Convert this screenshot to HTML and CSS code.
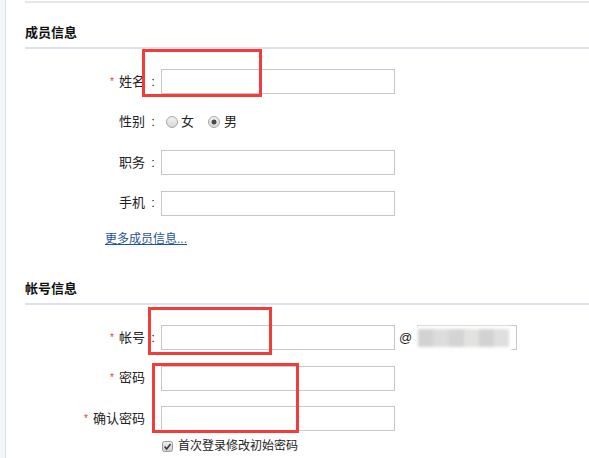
FILE: index.html
```html
<!DOCTYPE html>
<html lang="zh-CN">
<head>
<meta charset="utf-8">
<title>成员信息</title>
<link rel="stylesheet" href="styles.css">
</head>
<body>
<div class="page">
  <aside class="strip"></aside>
  <main class="main">
    <section class="sec">
      <h2 class="sec-title">成员信息</h2>
      <div class="form">
        <div class="row">
          <label class="lbl"><span class="req">*</span>姓名</label><span class="colon">:</span>
          <input class="ipt" type="text">
        </div>
        <div class="row">
          <label class="lbl">性别</label><span class="colon">:</span>
          <div class="radios">
            <input class="radio" type="radio" name="sex"><span class="opt">女</span>
            <input class="radio second" type="radio" name="sex" checked><span class="opt">男</span>
          </div>
        </div>
        <div class="row">
          <label class="lbl">职务</label><span class="colon">:</span>
          <input class="ipt" type="text">
        </div>
        <div class="row">
          <label class="lbl">手机</label><span class="colon">:</span>
          <input class="ipt" type="text">
        </div>
      </div>
      <div class="more-wrap"><a class="more" href="#">更多成员信息...</a></div>
    </section>
    <section class="sec sec-2">
      <h2 class="sec-title">帐号信息</h2>
      <div class="form">
        <div class="row">
          <label class="lbl"><span class="req">*</span>帐号</label><span class="colon">:</span>
          <input class="ipt" type="text">
          <span class="at">@</span>
          <div class="domain">
            <div class="mask">
              <div class="pix"></div>
            </div>
          </div>
        </div>
        <div class="row">
          <label class="lbl"><span class="req">*</span>密码</label><span class="colon"></span>
          <input class="ipt" type="password">
        </div>
        <div class="row">
          <label class="lbl"><span class="req">*</span>确认密码</label><span class="colon"></span>
          <input class="ipt" type="password">
        </div>
      </div>
      <div class="check-row">
        <span class="cbx"><svg width="11" height="11" viewBox="0 0 11 11"><defs><linearGradient id="g" x1="0" y1="0" x2="0" y2="1"><stop offset="0" stop-color="#f0f0f0"/><stop offset="1" stop-color="#cdcdcd"/></linearGradient></defs><rect x="0.5" y="0.5" width="10" height="10" rx="2" fill="url(#g)" stroke="#9a9a9a"/><path d="M2.6 5.6 L4.6 7.9 L8.6 2.9" fill="none" stroke="#3a3a3a" stroke-width="1.6"/></svg></span>
        <span class="check-text">首次登录修改初始密码</span>
      </div>
    </section>
  </main>
  <div class="mark m1"></div>
  <div class="mark m2"></div>
  <div class="mark m3"></div>
</div>
</body>
</html>
```
FILE: styles.css
```css
* { box-sizing: border-box; }
html, body { margin: 0; padding: 0; background: #fff; }
body {
  font-family: "Liberation Sans", "Noto Sans CJK SC", sans-serif;
  font-size: 13px;
  color: #222;
  overflow: hidden;
}
.page {
  position: relative;
  display: flex;
  min-height: 100vh;
}
.strip {
  width: 6px;
  flex: none;
  background: #f3f5f8;
  border-right: 1px solid #dde1e6;
}
.main {
  flex: 1;
  margin-left: 19px;
  margin-top: 1px;
  border-top: 2px solid #e6e6e6;
}
.sec-title {
  margin: 0;
  padding: 20px 0 4px 0;
  font-size: 13px;
  line-height: 20px;
  font-weight: bold;
  color: #111;
  border-bottom: 2px solid #dbe3ec;
}
.sec-2 { margin-top: 10px; }
.form {
  padding-top: 20px;
  display: flex;
  flex-direction: column;
  gap: 15.5px;
}
.row {
  display: flex;
  align-items: center;
  height: 25px;
}
.lbl {
  width: 120px;
  text-align: right;
  line-height: 20px;
  white-space: nowrap;
}
.req {
  color: #e4393c;
  font-size: 10px;
  margin-right: 5px;
  vertical-align: 1px;
}
.colon {
  width: 16px;
  text-align: center;
  line-height: 20px;
}
.ipt {
  width: 234px;
  height: 25px;
  margin: 0;
  border: 1px solid #c6c6c6;
  background: #fff;
  padding: 0 4px;
  font: inherit;
  outline: none;
}
.radios {
  display: flex;
  align-items: center;
  margin-left: 5px;
}
.radio {
  appearance: none;
  -webkit-appearance: none;
  width: 12px;
  height: 12px;
  margin: 0 3px 0 0;
  border: 1px solid #a8a8a8;
  border-radius: 50%;
  background: linear-gradient(#f2f2f2, #d6d6d6);
}
.radio.second { margin-left: 14px; margin-right: 4px; }
.radio:checked {
  background: radial-gradient(circle, #4a4a4a 0 2.2px, transparent 2.8px), linear-gradient(#f2f2f2, #d6d6d6);
}
.opt { line-height: 20px; }
.more-wrap {
  margin-top: 13.5px;
  padding-left: 80px;
  line-height: 20px;
}
.more {
  font-size: 12px;
  color: #1f5497;
  text-decoration: underline;
}
.at {
  margin: 0 5px 0 4px;
  font-size: 13px;
  line-height: 20px;
}
.domain {
  position: relative;
  width: 100px;
  height: 25px;
  border: 1px solid #c9c9c9;
}
.mask {
  position: absolute;
  left: -3px;
  top: 0;
  right: 4px;
  bottom: -3px;
  background: #fff;
  border-radius: 4px;
  filter: blur(1px);
  display: flex;
  align-items: center;
  padding: 0 3px 2px 3px;
}
.pix {
  width: 92px;
  height: 18px;
  margin-left: 0;
  background: linear-gradient(90deg,
    #d2d2d2 0 15px, #dcdcdc 15px 31px, #d4d4d4 31px 46px,
    #e2e2e0 46px 61px, #d2d2d2 61px 76px, #dfdfdf 76px 92px);
  filter: blur(1px);
}
.check-row {
  display: flex;
  align-items: center;
  margin-top: 6px;
  height: 18px;
  padding-left: 137px;
}
.cbx { display: flex; width: 11px; height: 11px; margin-right: 5px; }
.check-text { font-size: 12px; color: #222; line-height: 18px; }
.mark {
  position: absolute;
  border: 3px solid #f23c3c;
  pointer-events: none;
}
.m1 { left: 142px; top: 49px; width: 120px; height: 48px; }
.m2 { left: 148px; top: 307px; width: 124px; height: 48px; }
.m3 { left: 152px; top: 363px; width: 147px; height: 70px; }
```
